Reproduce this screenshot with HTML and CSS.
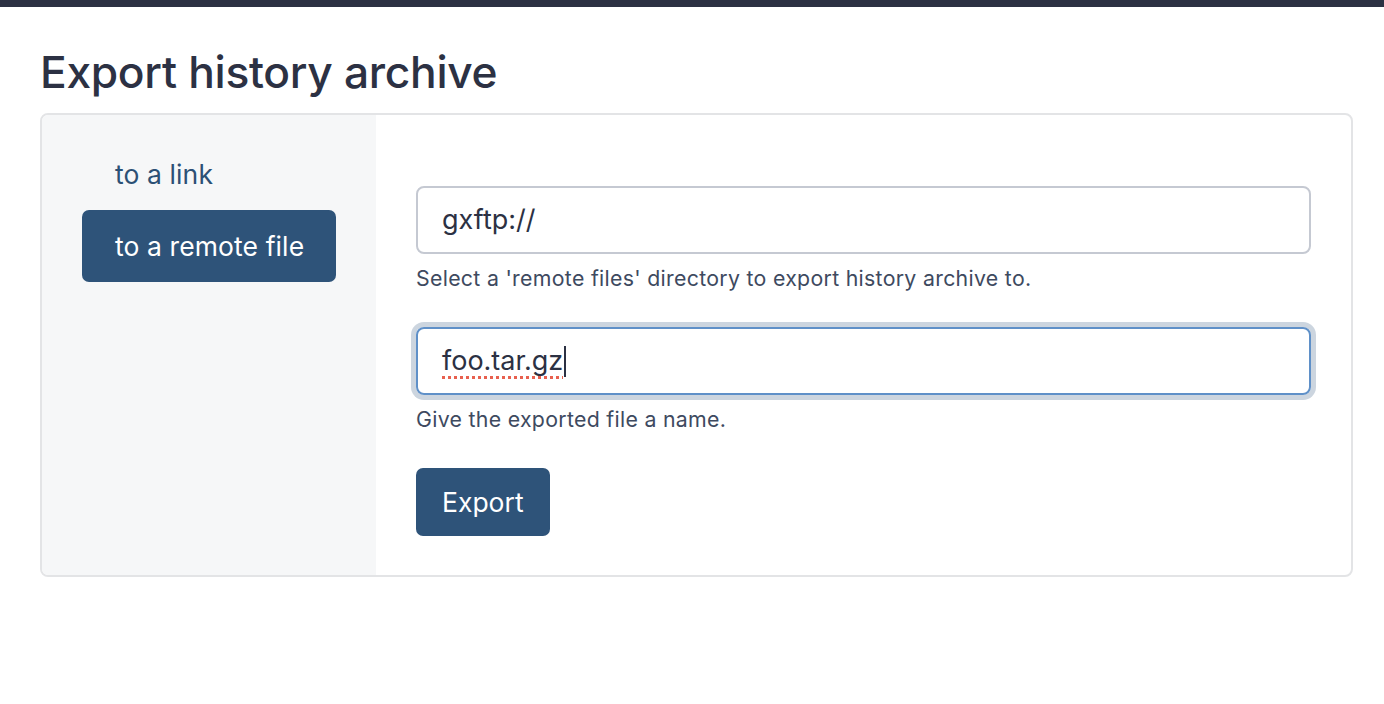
FILE: index.html
```html
<!DOCTYPE html>
<html lang="en">
<head>
<meta charset="utf-8">
<title>Export history archive</title>
<link rel="stylesheet" href="styles.css">
</head>
<body>
<div class="topbar"></div>
<main class="page">
  <h1 class="title">Export history archive</h1>
  <div class="card">
    <nav class="side">
      <a class="side-item" href="#">to a link</a>
      <a class="side-item active" href="#">to a remote file</a>
    </nav>
    <section class="content">
      <div class="group">
        <div class="field">gxftp://</div>
        <p class="help">Select a 'remote files' directory to export history archive to.</p>
      </div>
      <div class="group">
        <div class="field focused"><span class="misspelled">foo.tar.gz</span><span class="caret"></span></div>
        <p class="help">Give the exported file a name.</p>
      </div>
      <button class="btn">Export</button>
    </section>
  </div>
</main>
</body>
</html>
```

FILE: styles.css
```css
html, body {
  margin: 0;
  padding: 0;
  background: #ffffff;
  font-family: Inter, "Noto Sans", sans-serif;
  color: #2c3143;
}

.topbar {
  height: 7px;
  background: #2c3143;
}

.page {
  padding: 0 31px 0 40px;
}

.title {
  margin: 0;
  padding-top: 35px;
  height: 71px;
  box-sizing: content-box;
  font-size: 44.3px;
  font-weight: 500;
  line-height: 60px;
  letter-spacing: -0.3px;
  color: #2c3143;
}

.card {
  display: flex;
  border: 2px solid #e3e4e6;
  border-radius: 8px;
  overflow: hidden;
  height: 460px;
}

.side {
  width: 254px;
  flex: none;
  background: #f6f7f8;
  padding: 23px 40px;
  display: flex;
  flex-direction: column;
}

.side-item {
  display: block;
  height: 72px;
  line-height: 72px;
  padding: 0 20px 0 33px;
  white-space: nowrap;
  font-size: 26.5px;
  letter-spacing: 0.1px;
  color: #2c5075;
  text-decoration: none;
  border-radius: 7px;
}

.side-item.active {
  background: #2e5379;
  color: #ffffff;
}

.content {
  flex: 1;
  padding: 71px 40px 39px 40px;
}

.group {
  margin-bottom: 33px;
}

.field {
  box-sizing: border-box;
  height: 68px;
  border: 2px solid #c5c9d2;
  border-radius: 8px;
  padding: 0 24px;
  font-size: 27px;
  line-height: 64px;
  color: #2c3143;
  display: flex;
  align-items: center;
}

.field.focused {
  border-color: #5f90c8;
  box-shadow: 0 0 0 5px #ccd5df;
}

.misspelled {
  text-decoration: underline dotted #e8604f;
  text-decoration-thickness: 3px;
  text-underline-offset: 6px;
}

.caret {
  display: inline-block;
  width: 2px;
  height: 31px;
  background: #2c3143;
  margin-left: 1px;
}

.help {
  margin: 9px 0 0 0;
  font-size: 21.3px;
  letter-spacing: 0.3px;
  line-height: 31px;
  color: #3e4a5f;
}

.btn {
  display: block;
  height: 68px;
  padding: 0 26px;
  border: none;
  border-radius: 7px;
  background: #2e5379;
  color: #ffffff;
  font-family: Inter, "Noto Sans", sans-serif;
  font-size: 26.5px;
}
```
